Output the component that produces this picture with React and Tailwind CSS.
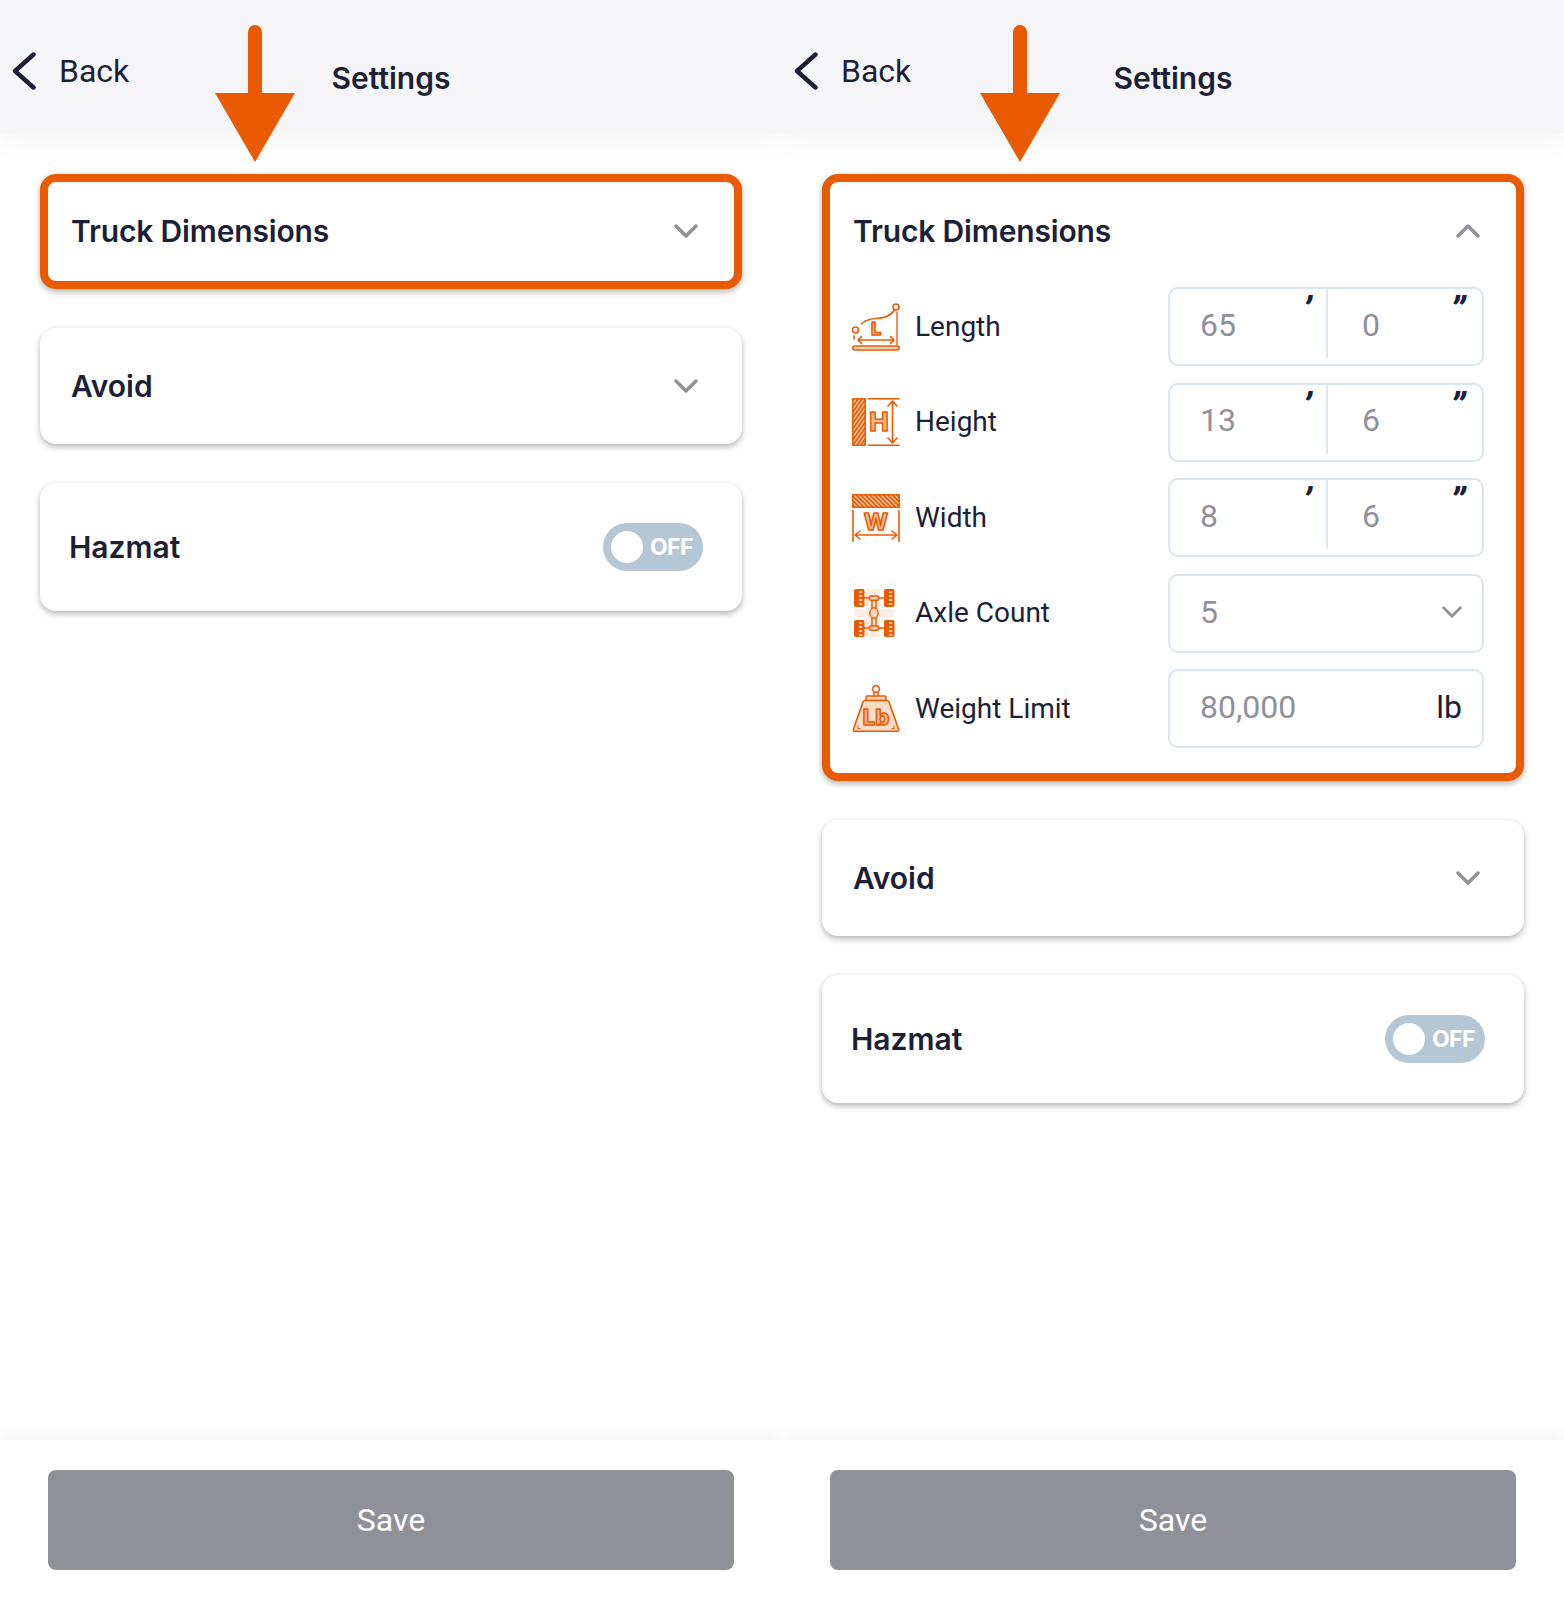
import { Fragment } from "react";

// two phone screens side by side, the second with the truck dimensions card open

const ORANGE = "#ea5a00";
const LIGHT = "#fbd5bb";

function Hatch({ id, angle }) {
  return (
    <pattern id={id} width="3.2" height="3.2" patternUnits="userSpaceOnUse" patternTransform={`rotate(${angle})`}>
      <rect width="3.2" height="3.2" fill={ORANGE} stroke="none" />
      <rect width="1.3" height="3.2" fill="#fbd5bb" stroke="none" />
    </pattern>
  );
}

function IconLetter({ x, y, size, children }) {
  return (
    <text
      x={x}
      y={y}
      textAnchor="middle"
      fontFamily="Inter, sans-serif"
      fontWeight="800"
      fontSize={size}
      fill="#f7b98f"
      stroke={ORANGE}
      strokeWidth="1.5"
    >
      {children}
    </text>
  );
}

function LengthIcon() {
  return (
    <svg width="48" height="48" viewBox="0 0 48 48" fill="none" stroke={ORANGE} strokeWidth="1.6" strokeLinecap="round" strokeLinejoin="round" aria-hidden="true">
      <circle cx="44" cy="4" r="3" />
      <circle cx="3.5" cy="27" r="3" />
      <path d="M42.5 7C38 14 31 15 24 15.5 17 16 11 18 7.5 23" strokeDasharray="30 1.5 2 1.5 2" />
      <path d="M45 9v33" strokeWidth="1.3" />
      <path d="M2 33v3" />
      <path d="M6 37h36M9.5 33.5 6 37l3.5 3.5M38.5 33.5 42 37l-3.5 3.5" />
      <rect x="0.8" y="43" width="46.4" height="4" rx="2" fill={LIGHT} />
      <IconLetter x="24" y="32" size="18">L</IconLetter>
    </svg>
  );
}

function HeightIcon() {
  return (
    <svg width="48" height="48" viewBox="0 0 48 48" fill="none" stroke={ORANGE} strokeWidth="1.6" strokeLinecap="round" strokeLinejoin="round" aria-hidden="true">
      <defs>
        <Hatch id="hatch-h" angle="35" />
      </defs>
      <rect x="0.8" y="0.8" width="12.4" height="46.4" fill="url(#hatch-h)" />
      <path d="M16.5.8H47M16.5 47.2H47" />
      <path d="M40.5 3v42M36 8l4.500-5L45 8M36 40l4.500 5 4.500-5" />
      <IconLetter x="27" y="33" size="26">H</IconLetter>
    </svg>
  );
}

function WidthIcon() {
  return (
    <svg width="48" height="48" viewBox="0 0 48 48" fill="none" stroke={ORANGE} strokeWidth="1.6" strokeLinecap="round" strokeLinejoin="round" aria-hidden="true">
      <defs>
        <Hatch id="hatch-w" angle="-45" />
      </defs>
      <rect x="0.8" y="0.8" width="46.4" height="12.400" fill="url(#hatch-w)" />
      <path d="M1 16.500V47.500M47 16.500V47.500" />
      <path d="M3 41h42M8 37l-5 4 5 4M40 37l5 4-5 4" />
      <IconLetter x="24" y="36" size="23">W</IconLetter>
    </svg>
  );
}

function AxleIcon() {
  const wheels = [
    [2, 0, 18],
    [32, 0, 18],
    [2, 31, 17],
    [32, 31, 17],
  ];
  return (
    <svg width="48" height="48" viewBox="0 0 48 48" fill="none" stroke={ORANGE} strokeWidth="1.4" strokeLinecap="round" strokeLinejoin="round" aria-hidden="true">
      <path d="M14 0h14v20h14v8H28v20H14V28H2v-8h12z" fill="#fdeee4" stroke="none" />
      {wheels.map(([x, y, h]) => (
        <Fragment key={`${x}-${y}`}>
          <rect x={x} y={y} width="10.500" height={h} rx="1.800" fill={ORANGE} stroke="none" />
          <path d={`M${x + 5.2} ${y + 3}h3M${x + 5.2} ${y + 7}h3M${x + 5.2} ${y + 11}h3M${x + 5.2} ${y + 15}h3`} stroke="#fff" strokeWidth="1.500" strokeLinecap="butt" />
        </Fragment>
      ))}
      <path d="M12 9h20M12 39h20M20 11v8M24 11v8M20 29v8M24 29v8" strokeWidth="1.500" />
      <ellipse cx="22" cy="24" rx="4.200" ry="5.200" fill="#fbd5bb" />
      <rect x="17.500" y="7" width="9" height="4.200" rx="1.500" fill="#fbd5bb" />
      <rect x="17.500" y="37" width="9" height="4.200" rx="1.500" fill="#fbd5bb" />
    </svg>
  );
}

function WeightIcon() {
  return (
    <svg width="48" height="48" viewBox="0 0 48 48" fill="none" stroke={ORANGE} strokeWidth="1.6" strokeLinecap="round" strokeLinejoin="round" aria-hidden="true">
      <circle cx="24" cy="4" r="3.400" />
      <path d="M22 7.500v3M26 7.500v3" />
      <rect x="14" y="11" width="20" height="4.500" rx="1" fill={LIGHT} />
      <path d="M13 15.500h22c1 0 1.600.5 2 1.500l9.500 27c.4 1.400-.2 2.300-1.600 2.300H3.100c-1.400 0-2-.9-1.600-2.300L11 17c.4-1 1-1.500 2-1.500z" fill="#fbdcc7" />
      <path d="M6 41v2.500h2M42 41v2.500h-2" strokeWidth="1" />
      <IconLetter x="24" y="40" size="22">Lb</IconLetter>
    </svg>
  );
}

function Chevron({ up = false, className = "w-[24px] h-[14px]" }) {
  return (
    <svg className={className} viewBox="0 0 24 14" fill="none" stroke="#8f9098" strokeWidth="3.4" strokeLinecap="round" strokeLinejoin="round" aria-hidden="true">
      <path d={up ? "M2 12 12 2l10 10" : "M2 2l10 10L22 2"} />
    </svg>
  );
}

function Tick({ mark, className }) {
  return (
    <span className={`absolute top-[2px] text-[37px] leading-[40px] font-black italic text-[#1c1f36] ${className}`}>
      {mark}
    </span>
  );
}

function FeetInches({ feet, inches }) {
  return (
    <div className="h-[79px] w-[316px] rounded-[10px] border-2 border-[#d9e5f1] flex text-[32px] text-[#8f9098]">
      <div className="relative w-[158px] h-[69px] border-r-2 border-[#d9e5f1] flex items-center pl-[30px] pt-[2px]">
        {feet}
        <Tick mark="’" className="left-[133px]" />
      </div>
      <div className="relative flex-1 flex items-center h-[69px] pl-[34px] pt-[2px]">
        {inches}
        <Tick mark="”" className="right-[16px]" />
      </div>
    </div>
  );
}

function Field({ children }) {
  return (
    <div className="h-[79px] w-[316px] rounded-[10px] border-2 border-[#d9e5f1] flex items-center justify-between pl-[30px] pr-[20px] pb-[3px] text-[32px] text-[#8f9098]">
      {children}
    </div>
  );
}

function DimensionRow({ icon, label, children }) {
  return (
    <div className="flex items-center h-[79px]">
      <div className="w-[48px] h-[48px] shrink-0">{icon}</div>
      <div className="ml-[15px] text-[28px] text-[#1c1f36]">{label}</div>
      <div className="ml-auto">{children}</div>
    </div>
  );
}

function Dimensions() {
  return (
    <div className="flex flex-col gap-[16.5px] pl-[22px] pr-[32px] pt-[6px] pb-[25px]">
      <DimensionRow icon={<LengthIcon />} label="Length">
        <FeetInches feet="65" inches="0" />
      </DimensionRow>
      <DimensionRow icon={<HeightIcon />} label="Height">
        <FeetInches feet="13" inches="6" />
      </DimensionRow>
      <DimensionRow icon={<WidthIcon />} label="Width">
        <FeetInches feet="8" inches="6" />
      </DimensionRow>
      <DimensionRow icon={<AxleIcon />} label="Axle Count">
        <Field>
          5
          <Chevron className="w-[20px] h-[12px]" />
        </Field>
      </DimensionRow>
      <DimensionRow icon={<WeightIcon />} label="Weight Limit">
        <Field>
          80,000
          <span className="text-[#1c1f36]">lb</span>
        </Field>
      </DimensionRow>
    </div>
  );
}

const cardShadow = "shadow-[0_3px_6px_rgba(0,0,0,0.28),0_0_4px_rgba(0,0,0,0.04)]";

function Heading({ children, className = "" }) {
  return <span className={`font-['Inter'] font-semibold text-[30px] text-[#1c1f36] ${className}`}>{children}</span>;
}

function Screen({ open, arrowLeft }) {
  return (
    <div className="relative w-[782px] h-[1600px] flex flex-col bg-white overflow-hidden">
      <header className="relative z-10 h-[133px] shrink-0 bg-[#f6f6f9] shadow-[0_4px_30px_rgba(0,0,0,0.06)] grid grid-cols-[1fr_auto_1fr] items-center">
        <div className="flex items-center pl-[12px] pt-[9px]">
          <svg width="24" height="38" viewBox="0 0 24 38" fill="none" stroke="#1c1f36" strokeWidth="4.4" strokeLinecap="round" strokeLinejoin="round" aria-hidden="true">
            <path d="M21.500 2.500 3 19l18.500 16.500" />
          </svg>
          <span className="ml-[23px] text-[32px] text-[#1c1f36]">Back</span>
        </div>
        <div className="pt-[24px]">
          <Heading>Settings</Heading>
        </div>
      </header>

      <svg
        className="absolute z-20 top-[25px]"
        style={{ left: arrowLeft }}
        width="80"
        height="137"
        viewBox="0 0 80 137"
        aria-hidden="true"
      >
        <path d="M33 68V7a7 7 0 0 1 14 0v61h33L40 137 0 68z" fill={ORANGE} />
      </svg>

      <main className="flex-1 flex flex-col gap-[39px] px-[40px] pt-[41px]">
        <section className={`rounded-[16px] border-[8px] border-[#ea5a00] bg-white ${cardShadow}`}>
          <div className="h-[99px] flex items-center justify-between pl-[23px] pr-[36px]">
            <Heading className="tracking-[-0.15px]">Truck Dimensions</Heading>
            <div className="mb-[2px]">
              <Chevron up={open} />
            </div>
          </div>
          {open && <Dimensions />}
        </section>

        <section className={`h-[116px] rounded-[16px] bg-white flex items-center justify-between pl-[31px] pr-[44px] ${cardShadow}`}>
          <Heading>Avoid</Heading>
          <Chevron />
        </section>

        <section className={`h-[128px] rounded-[16px] bg-white flex items-center justify-between pl-[29px] pr-[39px] ${cardShadow}`}>
          <Heading>Hazmat</Heading>
          <div className="w-[100px] h-[48px] rounded-full bg-[#b5c7d5] flex items-center pl-[8px]">
            <span className="w-[32px] h-[32px] rounded-full bg-white" />
            <span className="ml-[7px] font-['Inter'] font-bold text-[23px] tracking-[-0.6px] text-white">OFF</span>
          </div>
        </section>
      </main>

      <footer className="h-[160px] shrink-0 bg-white shadow-[0_-4px_14px_rgba(0,0,0,0.06)] px-[48px] pt-[30px]">
        <button className="w-full h-[100px] rounded-[8px] bg-[#8f9098] text-[32px] text-white">Save</button>
      </footer>
    </div>
  );
}

export default function App() {
  return (
    <div className="flex w-[1564px] h-[1600px] bg-white font-['Roboto',sans-serif] overflow-hidden">
      <Screen arrowLeft="215px" />
      <Screen open arrowLeft="198px" />
    </div>
  );
}
